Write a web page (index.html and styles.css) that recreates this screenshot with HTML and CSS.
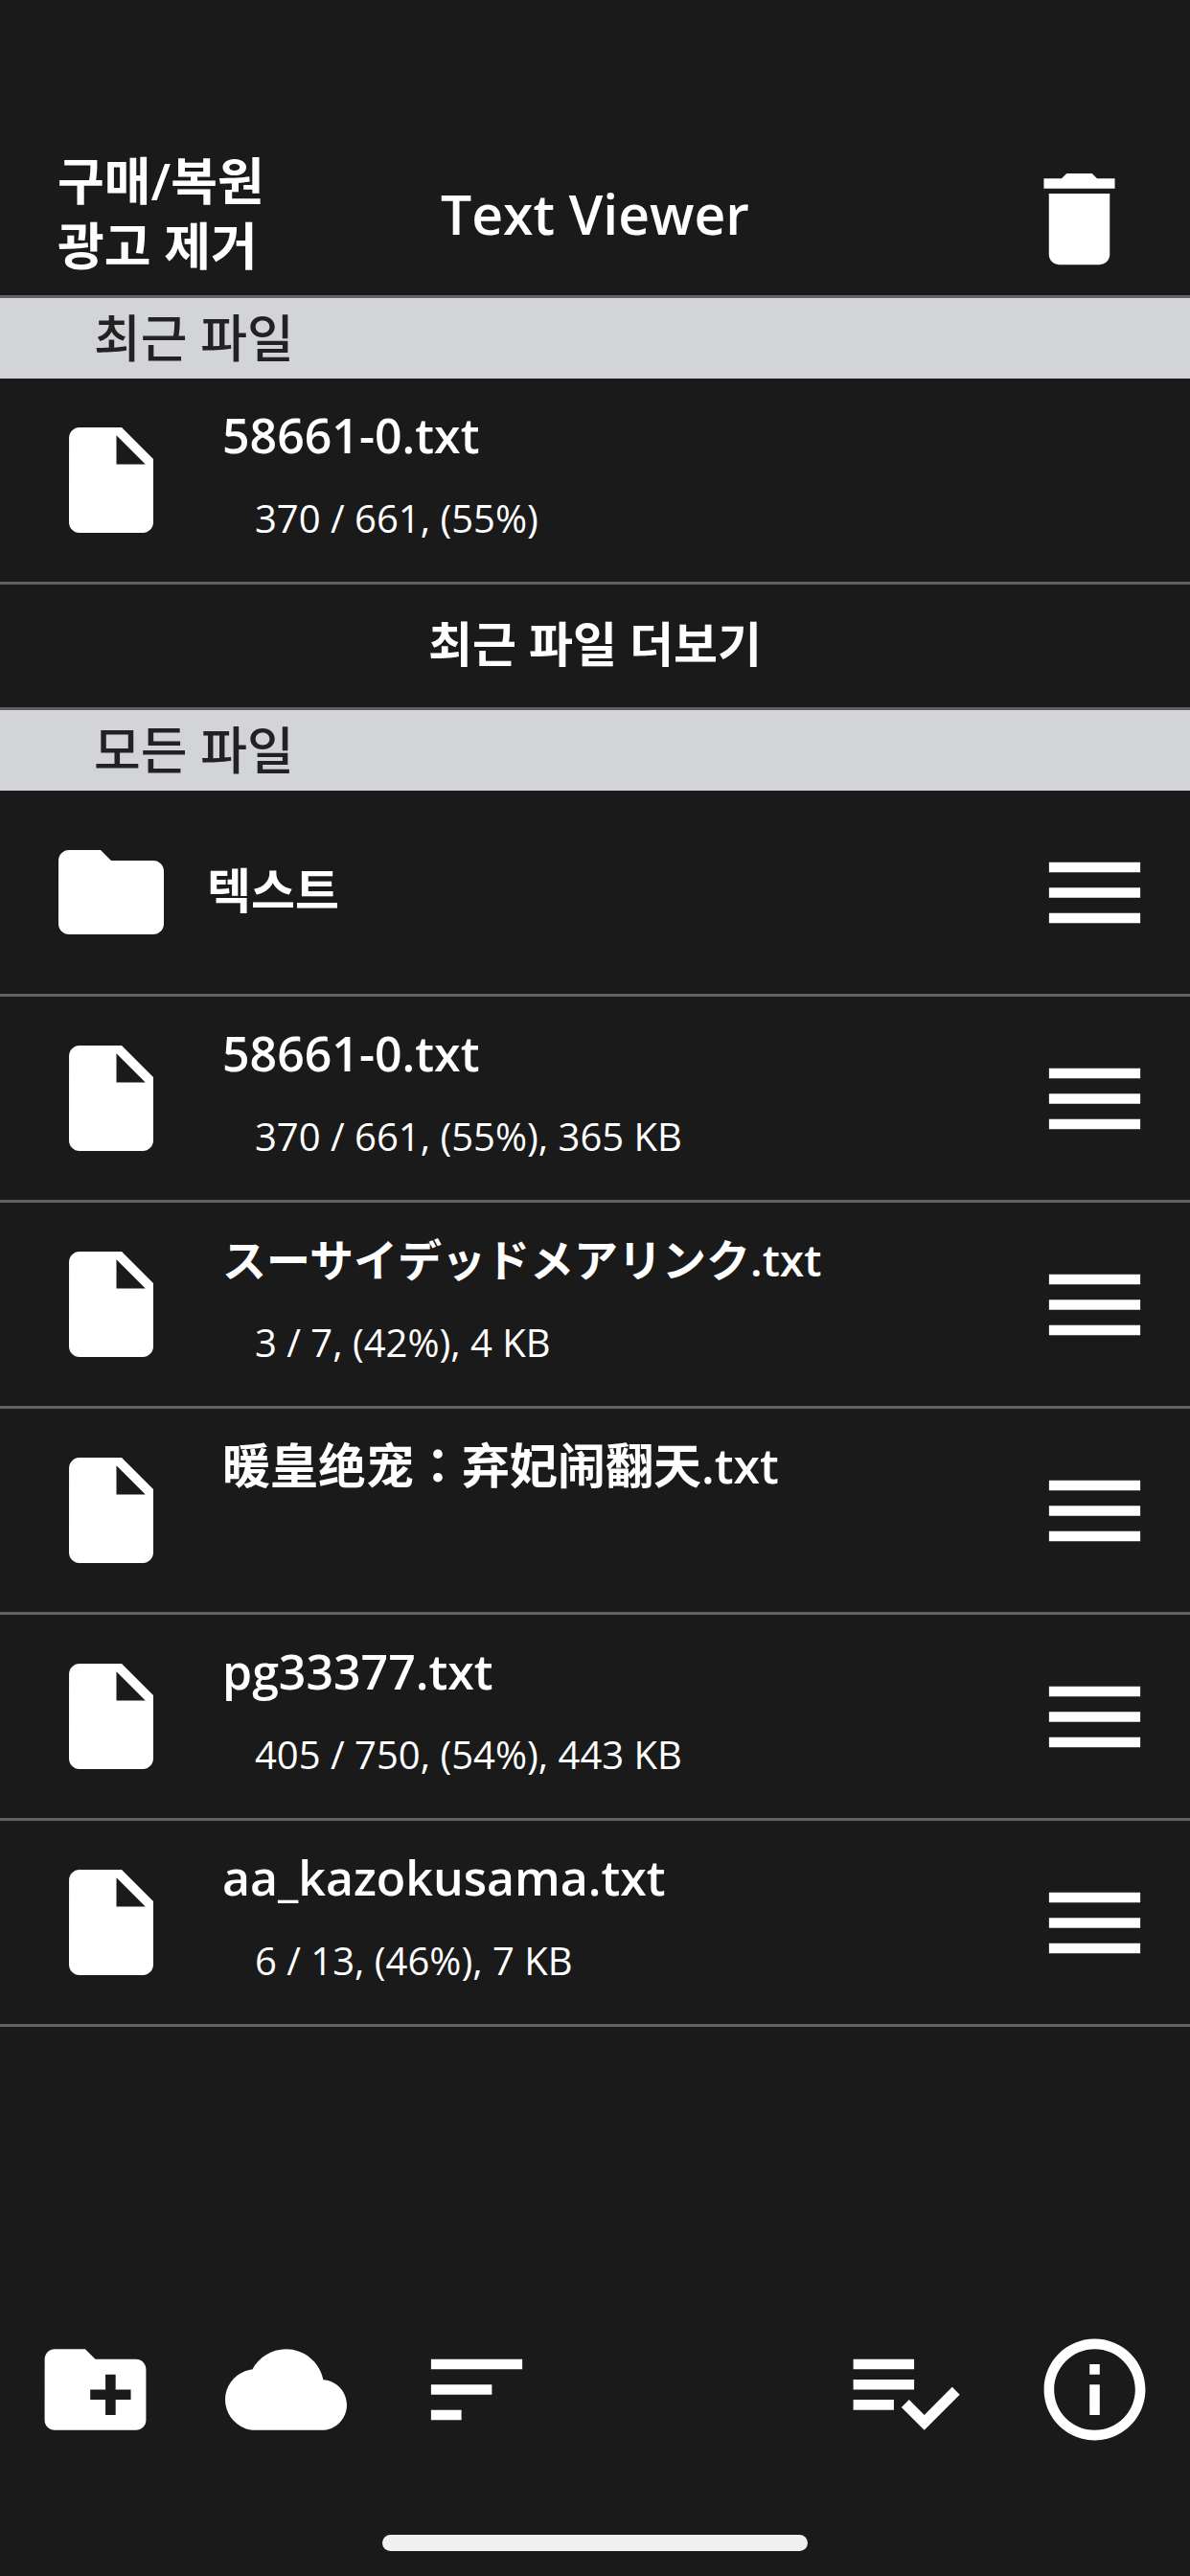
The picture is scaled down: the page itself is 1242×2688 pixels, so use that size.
FILE: index.html
```html
<!DOCTYPE html>
<html lang="ko">
<head>
<meta charset="UTF-8">
<meta name="viewport" content="width=device-width, initial-scale=1.0">
<title>Text Viewer</title>
<link rel="stylesheet" href="styles.css">
</head>
<body>
  <!-- icons used more than once -->
  <svg class="sprite" aria-hidden="true">
    <symbol id="icon-file" viewBox="0 0 24 24">
      <path d="M6 2c-1.1 0-1.99.9-1.99 2L4 20c0 1.1.89 2 1.99 2H18c1.1 0 2-.9 2-2V8l-6-6H6zm7 7V3.5L18.5 9H13z"/>
    </symbol>
    <symbol id="icon-menu" viewBox="0 0 24 24">
      <path d="M3 18h18v-2H3v2zm0-5h18v-2H3v2zm0-7v2h18V6H3z"/>
    </symbol>
  </svg>

  <header class="header">
    <button type="button" class="purchase">구매/복원<br>광고 제거</button>
    <h1>Text Viewer</h1>
    <button type="button" class="icon-button trash" aria-label="삭제">
      <svg viewBox="0 0 24 24"><path d="M6 19c0 1.1.9 2 2 2h8c1.1 0 2-.9 2-2V7H6v12zM19 4h-3.5l-1-1h-5l-1 1H5v2h14V4z"/></svg>
    </button>
  </header>

  <main>
    <h2>최근 파일</h2>
    <ul class="files">
      <li>
        <svg class="type"><use href="#icon-file"/></svg>
        <a href="#" class="file">
          <span class="name">58661-0.txt</span>
          <span class="info">370 / 661, (55%)</span>
        </a>
      </li>
    </ul>
    <button type="button" class="more">최근 파일 더보기</button>

    <h2>모든 파일</h2>
    <ul class="files">
      <li>
        <svg class="type" viewBox="0 0 24 24"><path d="M10 4H4c-1.1 0-1.99.9-1.99 2L2 18c0 1.1.9 2 2 2h16c1.1 0 2-.9 2-2V8c0-1.1-.9-2-2-2h-8l-2-2z"/></svg>
        <a href="#" class="folder">텍스트</a>
        <button type="button" class="icon-button" aria-label="이동"><svg><use href="#icon-menu"/></svg></button>
      </li>
      <li>
        <svg class="type"><use href="#icon-file"/></svg>
        <a href="#" class="file">
          <span class="name">58661-0.txt</span>
          <span class="info">370 / 661, (55%), 365 KB</span>
        </a>
        <button type="button" class="icon-button" aria-label="이동"><svg><use href="#icon-menu"/></svg></button>
      </li>
      <li>
        <svg class="type"><use href="#icon-file"/></svg>
        <a href="#" class="file">
          <span class="name" lang="ja">スーサイデッドメアリンク.txt</span>
          <span class="info">3 / 7, (42%), 4 KB</span>
        </a>
        <button type="button" class="icon-button" aria-label="이동"><svg><use href="#icon-menu"/></svg></button>
      </li>
      <li>
        <svg class="type"><use href="#icon-file"/></svg>
        <a href="#" class="file">
          <span class="name" lang="zh-TW">暖皇绝宠：弃妃闹翻天.txt</span>
        </a>
        <button type="button" class="icon-button" aria-label="이동"><svg><use href="#icon-menu"/></svg></button>
      </li>
      <li>
        <svg class="type"><use href="#icon-file"/></svg>
        <a href="#" class="file">
          <span class="name">pg33377.txt</span>
          <span class="info">405 / 750, (54%), 443 KB</span>
        </a>
        <button type="button" class="icon-button" aria-label="이동"><svg><use href="#icon-menu"/></svg></button>
      </li>
      <li>
        <svg class="type"><use href="#icon-file"/></svg>
        <a href="#" class="file">
          <span class="name">aa_kazokusama.txt</span>
          <span class="info">6 / 13, (46%), 7 KB</span>
        </a>
        <button type="button" class="icon-button" aria-label="이동"><svg><use href="#icon-menu"/></svg></button>
      </li>
    </ul>
  </main>

  <footer class="toolbar">
    <button type="button" class="icon-button" aria-label="새 폴더">
      <svg viewBox="0 0 24 24"><path d="M20 6h-8l-2-2H4c-1.11 0-1.99.89-1.99 2L2 18c0 1.11.89 2 2 2h16c1.11 0 2-.89 2-2V8c0-1.11-.89-2-2-2zm-1 8h-3v3h-2v-3h-3v-2h3V9h2v3h3v2z"/></svg>
    </button>
    <button type="button" class="icon-button" aria-label="클라우드">
      <svg viewBox="0 0 24 24"><path d="M19.35 10.04C18.67 6.59 15.64 4 12 4 9.11 4 6.6 5.64 5.35 8.04 2.34 8.36 0 10.91 0 14c0 3.31 2.69 6 6 6h13c2.76 0 5-2.24 5-5 0-2.64-2.05-4.78-4.65-4.96z"/></svg>
    </button>
    <button type="button" class="icon-button" aria-label="정렬">
      <svg viewBox="0 0 24 24"><path d="M3 18h6v-2H3v2zM3 6v2h18V6H3zm0 7h12v-2H3v2z"/></svg>
    </button>
    <button type="button" class="icon-button push" aria-label="선택">
      <svg viewBox="0 0 24 24"><path d="M14 10H2v2h12v-2zm0-4H2v2h12V6zM2 16h8v-2H2v2zm19.5-4.5L23 13l-6.99 7-4.51-4.5L13 14l3.01 3 5.49-5.5z"/></svg>
    </button>
    <button type="button" class="icon-button" aria-label="정보">
      <svg viewBox="0 0 24 24"><path d="M11 17h2v-6h-2v6zm1-15C6.48 2 2 6.48 2 12s4.48 10 10 10 10-4.48 10-10S17.52 2 12 2zm0 18c-4.41 0-8-3.59-8-8s3.59-8 8-8 8 3.59 8 8-3.59 8-8 8zM11 9h2V7h-2v2z"/></svg>
    </button>
  </footer>
  <div class="home-bar"></div>
</body>
</html>
```

FILE: styles.css
```css
* {
  box-sizing: border-box;
}

body {
  display: flex;
  flex-direction: column;
  min-height: 100vh;
  margin: 0;
  background-color: #1a1a1a;
  color: #fff;
  font-family: "Open Sans", "Noto Sans CJK KR", sans-serif;
}

button {
  margin: 0;
  padding: 0;
  border: none;
  background: none;
  color: inherit;
  font-family: inherit;
  cursor: pointer;
}

a {
  color: inherit;
  text-decoration: none;
}

svg {
  display: block;
  fill: currentColor;
}

.sprite {
  position: absolute;
  width: 0;
  height: 0;
}

.header {
  display: grid;
  grid-template-columns: 1fr auto 1fr;
  align-items: center;
  min-height: 311px;
  padding: 148px 52px 0;
  border-bottom: 3px solid #646262;
}

.purchase {
  justify-self: start;
  padding: 0 0 10px 8px;
  font-size: 53px;
  font-weight: 600;
  line-height: 68px;
  text-align: left;
}

h1 {
  margin: 0;
  padding-bottom: 10px;
  font-size: 57px;
  font-weight: 600;
  line-height: 68px;
}

h2 {
  margin: 0;
  padding: 0 98px;
  background-color: #d3d4d8;
  color: #222;
  font-size: 53px;
  font-weight: 500;
  line-height: 84px;
}

.icon-button svg {
  width: 127px;
  height: 127px;
}

.trash {
  justify-self: end;
}

.files {
  margin: 0;
  padding: 0;
  list-style: none;
}

.files li {
  display: flex;
  align-items: center;
  height: 215px;
  padding: 0 36px 0 50px;
  border-bottom: 3px solid #616161;
}

.type {
  flex: none;
  width: 132px;
  height: 132px;
}

.file,
.folder {
  flex: 1;
  font-size: 50px;
  font-weight: 600;
}

.folder {
  padding: 0 0 10px 34px;
}

.file {
  align-self: stretch;
  padding: 23px 0 0 50px;
}

.name,
.info {
  display: block;
  line-height: 72px;
}

.name:lang(ja) {
  font-family: "Open Sans", "Noto Sans CJK JP", sans-serif;
  font-size: 46px;
}

.name:lang(zh) {
  font-family: "Open Sans", "Noto Sans CJK TC", sans-serif;
}

.info {
  padding: 15px 0 0 34px;
  font-size: 40px;
  font-weight: 400;
}

.more {
  display: block;
  width: 100%;
  height: 131px;
  padding-bottom: 10px;
  border-bottom: 3px solid #616161;
  font-size: 50px;
  font-weight: 600;
}

.toolbar {
  display: flex;
  gap: 72px;
  margin-top: auto;
  padding: 0 36px 88px;
}

.push {
  margin-left: auto;
}

.home-bar {
  width: 444px;
  height: 17px;
  margin: 0 auto 26px;
  border-radius: 9px;
  background-color: #f0f0f0;
}
```
